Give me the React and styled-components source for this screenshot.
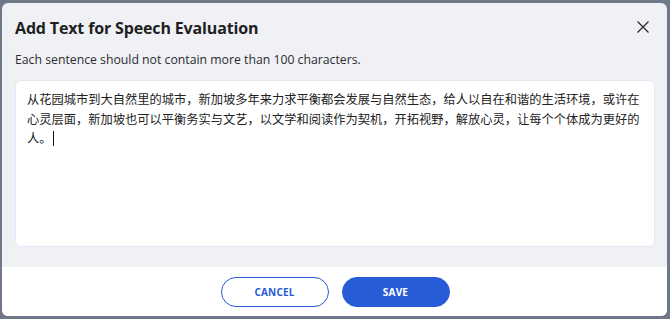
import React from 'react';
import styled, { createGlobalStyle } from 'styled-components';

const GlobalStyle = createGlobalStyle`
  html, body {
    margin: 0;
    padding: 0;
    background: #6f7888;
    font-family: 'Open Sans', 'Noto Sans CJK SC', sans-serif;
  }
`;

const Backdrop = styled.div`
  width: 670px;
  height: 319px;
  padding: 3px 3px 3px 2px;
  box-sizing: border-box;
  background: #6f7888;
`;

const Dialog = styled.div`
  height: 100%;
  display: flex;
  flex-direction: column;
  border-radius: 6px;
  overflow: hidden;
  background: #f0f1f5;
`;

const Body = styled.div`
  flex: 1;
  display: flex;
  flex-direction: column;
  padding: 0 12px 20px 13px;
`;

const Header = styled.div`
  display: flex;
  align-items: flex-start;
  justify-content: space-between;
  padding-top: 14px;
`;

const Title = styled.h2`
  margin: 0;
  font-size: 16px;
  font-weight: 700;
  color: #1e1f22;
  letter-spacing: -0.15px;
`;

const CloseButton = styled.button`
  border: none;
  background: transparent;
  padding: 0;
  margin: 3px 5px 0 0;
  width: 14px;
  height: 14px;
  display: flex;
  align-items: center;
  justify-content: center;
  cursor: pointer;
  color: #2a2b2e;
`;

const Hint = styled.p`
  margin: 12px 0 12px;
  font-size: 12.25px;
  color: #2b2c30;
`;

const TextBox = styled.div`
  flex: 1;
  background: #fff;
  border: 1px solid #e3e8f2;
  border-radius: 6px;
  padding: 9px 12px 10px 11px;
  font-family: 'Noto Sans CJK SC', sans-serif;
  font-size: 12.25px;
  line-height: 19.6px;
  color: #222;
`;

const Caret = styled.span`
  display: inline-block;
  width: 1px;
  height: 15px;
  margin-left: 1px;
  vertical-align: -3px;
  background: #111;
`;

const Footer = styled.div`
  height: 49px;
  background: #fff;
  display: flex;
  align-items: center;
  justify-content: center;
  gap: 13px;
  padding-left: 1px;
`;

const Button = styled.button`
  width: 108px;
  height: 30px;
  border-radius: 15px;
  border: 1px solid #285cd6;
  background: ${(p) => (p.$primary ? '#285cd6' : '#fff')};
  color: ${(p) => (p.$primary ? '#fff' : '#285cd6')};
  font-family: 'Open Sans', sans-serif;
  font-size: 10px;
  font-weight: 700;
  letter-spacing: 0.2px;
  cursor: pointer;
`;

const text =
  '从花园城市到大自然里的城市，新加坡多年来力求平衡都会发展与自然生态，给人以自在和谐的生活环境，或许在心灵层面，新加坡也可以平衡务实与文艺，以文学和阅读作为契机，开拓视野，解放心灵，让每个个体成为更好的人。';

export default function App() {
  return (
    <>
      <GlobalStyle />
      <Backdrop>
        <Dialog>
          <Body>
            <Header>
              <Title>Add Text for Speech Evaluation</Title>
              <CloseButton aria-label="Close">
                <svg width="12" height="12" viewBox="0 0 12 12" fill="none" stroke="currentColor" strokeWidth="1.3">
                  <path d="M0.5 0.5L11.5 11.5M11.5 0.5L0.5 11.5" />
                </svg>
              </CloseButton>
            </Header>
            <Hint>Each sentence should not contain more than 100 characters.</Hint>
            <TextBox>
              {text}
              <Caret />
            </TextBox>
          </Body>
          <Footer>
            <Button>CANCEL</Button>
            <Button $primary>SAVE</Button>
          </Footer>
        </Dialog>
      </Backdrop>
    </>
  );
}
